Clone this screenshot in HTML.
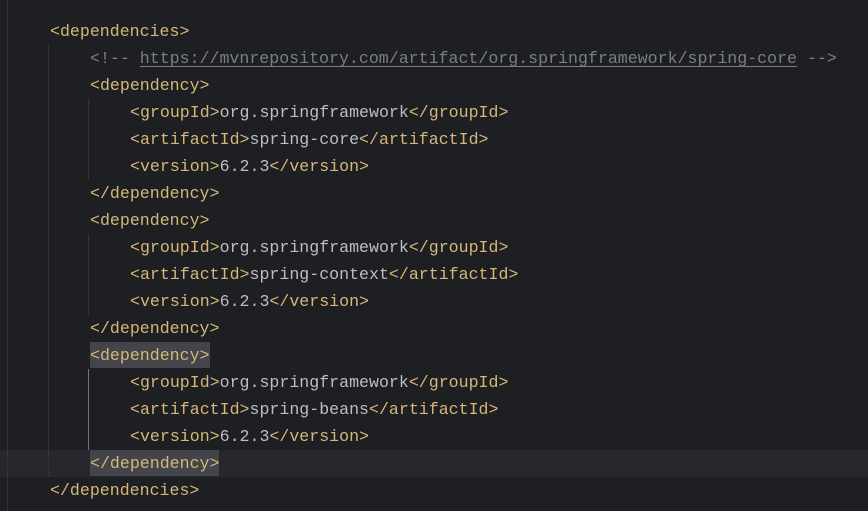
<!DOCTYPE html>
<html><head><style>
html,body{margin:0;padding:0;background:#1e1f22;width:868px;height:511px;overflow:hidden;}
.ed{position:relative;width:868px;height:511px;font-family:"Liberation Mono",monospace;font-size:16.6px;}
.l{position:absolute;left:0;width:868px;height:27px;line-height:27px;white-space:pre;color:#bcbec4;}
.t{color:#d5b778}
.c{color:#7a7e85}
.u{text-decoration:underline;text-underline-offset:3px}
.hl{background:#43454a;display:inline-block;height:26px;line-height:27px;vertical-align:top;margin-top:0px}
.g{position:absolute;width:1px;background:#313438}
</style></head><body><div class="ed">
<div class="l" style="top:450px;background:#26282e"></div>
<div class="g" style="left:7px;top:0;height:511px"></div>
<div class="g" style="left:48px;top:45px;height:432px"></div>
<div class="g" style="left:88px;top:99px;height:81px"></div>
<div class="g" style="left:88px;top:234px;height:81px"></div>
<div class="g" style="left:88px;top:369px;height:81px;background:#6f737a"></div>
<div class="l" style="top:18px;padding-left:50px"><span class="t">&lt;dependencies&gt;</span></div>
<div class="l" style="top:45px;padding-left:90px"><span class="c">&lt;!-- <span class="u">https://mvnrepository.com/artifact/org.springframework/spring-core</span> --&gt;</span></div>
<div class="l" style="top:72px;padding-left:90px"><span class="t">&lt;dependency&gt;</span></div>
<div class="l" style="top:99px;padding-left:130px"><span class="t">&lt;groupId&gt;</span>org.springframework<span class="t">&lt;/groupId&gt;</span></div>
<div class="l" style="top:126px;padding-left:130px"><span class="t">&lt;artifactId&gt;</span>spring-core<span class="t">&lt;/artifactId&gt;</span></div>
<div class="l" style="top:153px;padding-left:130px"><span class="t">&lt;version&gt;</span>6.2.3<span class="t">&lt;/version&gt;</span></div>
<div class="l" style="top:180px;padding-left:90px"><span class="t">&lt;/dependency&gt;</span></div>
<div class="l" style="top:207px;padding-left:90px"><span class="t">&lt;dependency&gt;</span></div>
<div class="l" style="top:234px;padding-left:130px"><span class="t">&lt;groupId&gt;</span>org.springframework<span class="t">&lt;/groupId&gt;</span></div>
<div class="l" style="top:261px;padding-left:130px"><span class="t">&lt;artifactId&gt;</span>spring-context<span class="t">&lt;/artifactId&gt;</span></div>
<div class="l" style="top:288px;padding-left:130px"><span class="t">&lt;version&gt;</span>6.2.3<span class="t">&lt;/version&gt;</span></div>
<div class="l" style="top:315px;padding-left:90px"><span class="t">&lt;/dependency&gt;</span></div>
<div class="l" style="top:342px;padding-left:90px"><span class="t hl">&lt;dependency&gt;</span></div>
<div class="l" style="top:369px;padding-left:130px"><span class="t">&lt;groupId&gt;</span>org.springframework<span class="t">&lt;/groupId&gt;</span></div>
<div class="l" style="top:396px;padding-left:130px"><span class="t">&lt;artifactId&gt;</span>spring-beans<span class="t">&lt;/artifactId&gt;</span></div>
<div class="l" style="top:423px;padding-left:130px"><span class="t">&lt;version&gt;</span>6.2.3<span class="t">&lt;/version&gt;</span></div>
<div class="l" style="top:450px;padding-left:90px"><span class="t hl">&lt;/dependency&gt;</span></div>
<div class="l" style="top:477px;padding-left:50px"><span class="t">&lt;/dependencies&gt;</span></div>
</div></body></html>
